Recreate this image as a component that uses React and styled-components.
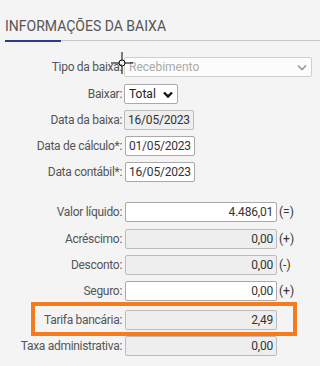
import React from "react";
import styled, { createGlobalStyle } from "styled-components";

const Global = createGlobalStyle`
  html, body { margin: 0; padding: 0; background: #f4f4f4; }
  body { font-family: Roboto, "Liberation Sans", sans-serif; width: 320px; height: 366px; overflow: hidden; }
`;

const Page = styled.div`
  position: relative;
  padding: 0 0 0 5px;
`;

const Title = styled.h2`
  margin: 0;
  padding-top: 18px;
  font-size: 14px;
  font-weight: 400;
  color: #555;
  line-height: 16px;
  height: 22px;
`;

const Rule = styled.div`
  display: flex;
  align-items: flex-start;
`;

const RuleAccent = styled.div`
  width: 56px;
  height: 2px;
  background: #2d3a8c;
`;

const RuleLine = styled.div`
  flex: 1;
  height: 1px;
  background: #c8c8c8;
`;

const Form = styled.div`
  display: flex;
  flex-direction: column;
  padding-top: 15px;
`;

const Row = styled.div`
  position: relative;
  display: flex;
  align-items: center;
  height: 20px;
  margin-bottom: ${(p) => p.$after ?? 6}px;
`;

const Label = styled.label`
  width: 117px;
  text-align: right;
  font-size: 12px;
  letter-spacing: -0.3px;
  color: #555;
  padding-right: 2px;
  white-space: nowrap;
`;

const Field = styled.div`
  box-sizing: border-box;
  width: ${(p) => p.$w}px;
  height: 20px;
  border: 1px solid ${(p) => (p.$disabled ? "#bcbcbc" : "#a9a9a9")};
  border-radius: 2px;
  background: ${(p) => (p.$disabled ? "#eeeeee" : "#fff")};
  display: flex;
  align-items: center;
  justify-content: ${(p) => (p.$right ? "flex-end" : "flex-start")};
  padding: 0 3px;
  font-size: 12px;
  letter-spacing: -0.2px;
  color: #333;
  margin-left: ${(p) => p.$ml ?? 0}px;
  white-space: nowrap;
`;

const SelectBox = styled.div`
  box-sizing: border-box;
  width: ${(p) => p.$w}px;
  height: 20px;
  border: 1px solid ${(p) => (p.$disabled ? "#cfcfcf" : "#a9a9a9")};
  border-radius: 2px;
  background: ${(p) => (p.$disabled ? "#fcfcfc" : "#fff")};
  display: flex;
  align-items: center;
  justify-content: space-between;
  padding: 0 4px 0 4px;
  font-size: 12px;
  color: ${(p) => (p.$disabled ? "#aaa" : "#222")};
`;

const Suffix = styled.span`
  font-size: 12px;
  color: #333;
  margin-left: 2px;
`;

const Highlight = styled.div`
  position: absolute;
  left: 26px;
  top: -8px;
  width: 266px;
  height: 34px;
  box-sizing: border-box;
  border: 4px solid #f47b20;
  pointer-events: none;
`;

const Cursor = styled.svg`
  position: absolute;
  left: 111px;
  top: 52px;
`;

const Chevron = ({ color, sw }) => (
  <svg width="10" height="7" viewBox="0 0 10 7">
    <path d="M1 1.5 L5 5.5 L9 1.5" fill="none" stroke={color} strokeWidth={sw} />
  </svg>
);

export default function App() {
  return (
    <>
      <Global />
      <Page>
        <Title>INFORMAÇÕES DA BAIXA</Title>
        <Rule>
          <RuleAccent />
          <RuleLine />
        </Rule>
        <Form>
          <Row $after={7}>
            <Label>Tipo da baixa:</Label>
            <SelectBox $w={188} $disabled>
              <span>Recebimento</span>
              <Chevron color="#999" sw={1.6} />
            </SelectBox>
          </Row>
          <Row>
            <Label>Baixar:</Label>
            <SelectBox $w={54}>
              <span>Total</span>
              <Chevron color="#111" sw={2.4} />
            </SelectBox>
          </Row>
          <Row>
            <Label>Data da baixa:</Label>
            <Field $w={70} $disabled>16/05/2023</Field>
          </Row>
          <Row>
            <Label>Data de cálculo*:</Label>
            <Field $w={70} $ml={1}>01/05/2023</Field>
          </Row>
          <Row $after={20}>
            <Label>Data contábil*:</Label>
            <Field $w={70} $ml={1}>16/05/2023</Field>
          </Row>
          <Row $after={7}>
            <Label>Valor líquido:</Label>
            <Field $w={152} $ml={1} $right>4.486,01</Field>
            <Suffix>(=)</Suffix>
          </Row>
          <Row>
            <Label>Acréscimo:</Label>
            <Field $w={152} $ml={1} $right $disabled>0,00</Field>
            <Suffix>(+)</Suffix>
          </Row>
          <Row>
            <Label>Desconto:</Label>
            <Field $w={152} $ml={1} $right $disabled>0,00</Field>
            <Suffix>(-)</Suffix>
          </Row>
          <Row $after={9}>
            <Label>Seguro:</Label>
            <Field $w={152} $ml={1} $right>0,00</Field>
            <Suffix>(+)</Suffix>
          </Row>
          <Row $after={6}>
            <Label>Tarifa bancária:</Label>
            <Field $w={152} $ml={1} $right $disabled>2,49</Field>
            <Highlight />
          </Row>
          <Row>
            <Label>Taxa administrativa:</Label>
            <Field $w={152} $ml={1} $right $disabled>0,00</Field>
          </Row>
        </Form>
        <Cursor width="22" height="22" viewBox="0 0 22 22">
          <path d="M11 0 V8 M11 14 V22 M0 11 H8 M14 11 H22" stroke="#000" strokeWidth="1" />
          <circle cx="11" cy="11" r="3" fill="none" stroke="#000" strokeWidth="1" />
        </Cursor>
      </Page>
    </>
  );
}
